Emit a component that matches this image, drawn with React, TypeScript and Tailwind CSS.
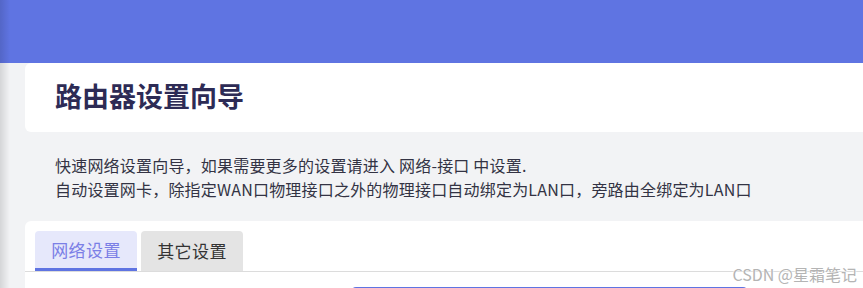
import React from "react";

const font = { fontFamily: '"Noto Sans CJK SC", "Noto Sans", sans-serif' };

function Tabs() {
  return (
    <div className="flex gap-[4px] border-b border-[#dcdcdc] pl-[10px]">
      <div className="w-[102px] h-[40px] rounded-t-[4px] bg-[#e6e8fb] border-b-[3px] border-[#5f74e2] flex items-center justify-center text-[17px] tracking-[0.4px] text-[#7b7fe6]">
        网络设置
      </div>
      <div className="w-[102px] h-[40px] rounded-t-[4px] bg-[#e4e4e4] flex items-center justify-center text-[17px] tracking-[0.4px] text-[#333333]">
        其它设置
      </div>
    </div>
  );
}

export default function App() {
  return (
    <div className="relative w-full h-[288px] overflow-hidden bg-[#f2f3f5]" style={font}>
      <div className="h-[63px] bg-[#5f74e2]" />
      <div className="pl-[25px]">
        <div className="h-[69px] bg-white rounded-l-[6px] flex items-center pl-[30px] pb-[5px]">
          <h1 className="text-[27px] font-bold text-[#2d2b55] leading-none">路由器设置向导</h1>
        </div>
        <div className="pl-[30px] pt-[21px] pb-[20px] text-[16px] tracking-[0.2px] leading-[24px] text-[#333344]">
          <p>快速网络设置向导，如果需要更多的设置请进入 网络-接口 中设置.</p>
          <p>自动设置网卡，除指定WAN口物理接口之外的物理接口自动绑定为LAN口，旁路由全绑定为LAN口</p>
        </div>
        <div className="bg-white rounded-tl-[6px] pt-[10px] h-[100px]">
          <Tabs />
          <div className="ml-[327px] mt-[15px] w-[395px] h-[20px] rounded-t-[4px] bg-[#5f74e2]" />
        </div>
      </div>
      <div className="pointer-events-none absolute left-0 top-0 h-full w-[10px] bg-gradient-to-r from-[rgba(0,0,0,0.12)] to-transparent" />
      <div
        className="absolute right-[6px] top-[262px] text-[16px] text-[#b4b4b4] leading-[24px]"
        style={{ textShadow: "0 0 2px #fff, 0 0 2px #fff" }}
      >
        CSDN @星霜笔记
      </div>
    </div>
  );
}
